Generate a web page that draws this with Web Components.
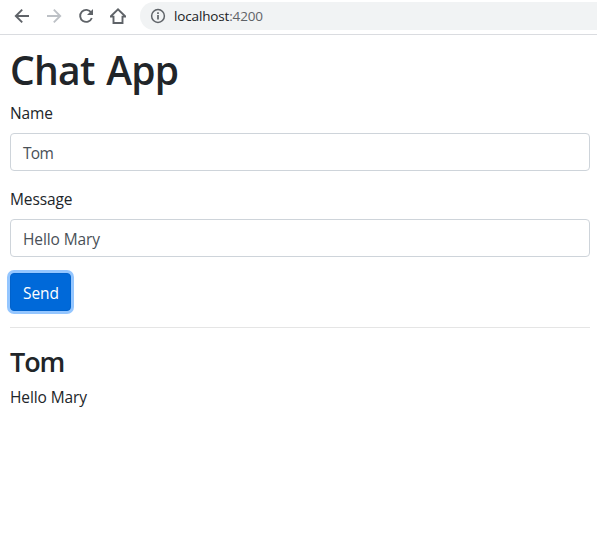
<!DOCTYPE html>
<html lang="en">
<head>
<meta charset="utf-8">
<title>Chat App</title>
<style>
body{margin:0;background:#fff;color:#212529;font:400 15.5px/24px "Open Sans","Noto Sans",sans-serif;letter-spacing:-.1px}
</style>
</head>
<body>
<browser-bar host="localhost" port=":4200"></browser-bar>
<chat-app></chat-app>
<script>
const define = (name, html, setup) => {
  const t = document.createElement('template');
  t.innerHTML = html;
  customElements.define(name, class extends HTMLElement {
    constructor() {
      super();
      this.attachShadow({mode: 'open'}).append(t.content.cloneNode(true));
    }
    connectedCallback() { if (setup) setup(this, this.shadowRoot); }
  });
};

define('browser-bar', `
<style>
:host{display:flex;height:34px;border-bottom:1px solid #dadce0;align-items:flex-start;background:#fff}
nav{display:flex;gap:16px;padding:8px 14px 0 14px}
svg{display:block;width:16px;height:16px;fill:none;stroke:#5f6368;stroke-width:1.9}
.off{stroke:#bdc1c6}
.url{display:flex;flex:1;align-items:center;height:28px;margin-top:2px;padding-left:10px;border-radius:14px 0 0 14px;background:#f1f3f4;font-size:13.5px;line-height:28px;color:#5f6368;box-sizing:border-box}
.url svg{margin-right:8px;stroke-width:1.5}
.url span{letter-spacing:-.15px}
.host{color:#202124}
</style>
<nav>
<svg viewBox="0 0 16 16"><path d="M15 8H2M8.2 1.6 1.8 8l6.4 6.4"/></svg>
<svg class="off" viewBox="0 0 16 16"><path d="M1 8h13M7.8 1.6 14.2 8l-6.4 6.4"/></svg>
<svg viewBox="0 0 16 16"><path d="M13.2 4.6A6 6 0 1 0 13.8 10"/><path d="M15 1v6H9z" fill="#5f6368" stroke="none"/></svg>
<svg viewBox="0 0 16 16"><path d="M.6 8.6H3.5V15h9V8.6h2.9L8 1.4z"/></svg>
</nav>
<div class="url"><svg viewBox="0 0 16 16"><circle cx="8" cy="8" r="6.4"/><path d="M8 7v4.5M8 4.3v1.6" stroke-width="1.7"/></svg><span class="host"></span><span class="port"></span></div>`,
(el, root) => {
  root.querySelector('.host').textContent = el.getAttribute('host');
  root.querySelector('.port').textContent = el.getAttribute('port');
});

define('form-field', `
<style>
:host{display:block;margin-bottom:16px}
label{display:block;margin-bottom:8px}
.box{box-sizing:border-box;height:38px;padding:7px 12px 5px;border:1px solid #ced4da;border-radius:4px;color:#495057;letter-spacing:var(--value-spacing,-.1px)}
</style>
<label><slot name="label"></slot></label>
<div class="box" role="textbox"><slot></slot></div>`);

define('send-button', `
<style>
:host{display:block;width:max-content}
button{display:block;box-sizing:border-box;width:61px;height:38px;padding:1px 0 0 1px;border:1px solid #0062cc;border-radius:4px;background:#0069d9;color:#fff;font:inherit;letter-spacing:-.1px;text-align:center;box-shadow:0 0 0 3px #94c6ff}
</style>
<button type="button"><slot></slot></button>`);

define('chat-message', `
<style>
:host{display:block}
h3{box-sizing:border-box;height:33.6px;padding-top:1px;margin:0 0 7.4px;font-size:27px;font-weight:600;line-height:33.6px;letter-spacing:-1.1px}
p{margin:0}
</style>
<h3><slot name="author"></slot></h3><p><slot></slot></p>`);

define('chat-app', `
<style>
:host{display:block;padding:10px 7px 0 10px}
h1{box-sizing:border-box;height:48px;padding-top:1px;margin:0 0 8px;font-size:39px;font-weight:600;line-height:48px;letter-spacing:-.7px;word-spacing:2px}
hr{margin:16px 0;border:0;border-top:1px solid #e5e5e5}
.name{--value-spacing:-.7px}
</style>
<h1>Chat App</h1>
<form-field class="name"><span slot="label">Name</span>Tom</form-field>
<form-field><span slot="label">Message</span>Hello Mary</form-field>
<send-button>Send</send-button>
<hr>
<chat-message><span slot="author">Tom</span>Hello Mary</chat-message>`);
</script>
</body>
</html>
